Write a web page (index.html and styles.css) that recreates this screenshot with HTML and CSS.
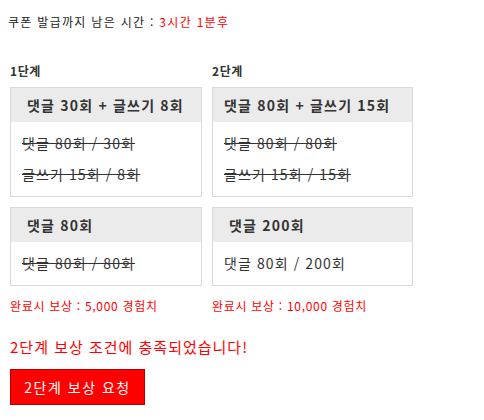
FILE: index.html
```html
<!DOCTYPE html>
<html lang="ko">
<head>
<meta charset="utf-8">
<link rel="stylesheet" href="styles.css">
</head>
<body>
<p class="timer">쿠폰 발급까지 남은 시간 : <span class="red">3시간 1분후</span></p>
<div class="wrap">
  <div class="steps">
    <div class="label">1단계</div>
    <div class="label">2단계</div>
    <div class="card">
      <div class="card-head">댓글 30회 + 글쓰기 8회</div>
      <div class="card-body">
        <div class="row done">댓글 80회 / 30회</div>
        <div class="row done">글쓰기 15회 / 8회</div>
      </div>
    </div>
    <div class="card">
      <div class="card-head tight">댓글 80회 + 글쓰기 15회</div>
      <div class="card-body">
        <div class="row done">댓글 80회 / 80회</div>
        <div class="row done">글쓰기 15회 / 15회</div>
      </div>
    </div>
    <div class="card">
      <div class="card-head">댓글 80회</div>
      <div class="card-body">
        <div class="row done">댓글 80회 / 80회</div>
      </div>
    </div>
    <div class="card">
      <div class="card-head">댓글 200회</div>
      <div class="card-body">
        <div class="row">댓글 80회 / 200회</div>
      </div>
    </div>
    <div class="reward">완료시 보상 : 5,000 경험치</div>
    <div class="reward">완료시 보상 : 10,000 경험치</div>
  </div>
  <p class="notice">2단계 보상 조건에 충족되었습니다!</p>
  <button class="btn">2단계 보상 요청</button>
</div>
</body>
</html>
```
FILE: styles.css
```css
body {
  margin: 8px;
  font-family: "Noto Sans CJK KR", "Noto Sans", sans-serif;
  color: #333;
  background: #fff;
}
.red { color: #ff0000; }
.timer {
  margin: 0;
  padding-top: 5px;
  font-size: 12px;
  line-height: 17px;
  letter-spacing: 1.3px;
  color: #222;
}
.wrap {
  padding-left: 2px;
}
.steps {
  display: grid;
  grid-template-columns: 192px 201px;
  column-gap: 10px;
  margin-top: 33px;
}
.label {
  font-size: 12px;
  font-weight: bold;
  line-height: 16px;
  letter-spacing: 0.6px;
  margin-bottom: 8px;
  color: #333;
}
.card {
  border: 1px solid #d9d9d9;
  margin-bottom: 10px;
  align-self: start;
}
.card-head {
  background: #ebebeb;
  height: 34px;
  line-height: 34px;
  padding: 0 16px;
  font-size: 14px;
  font-weight: bold;
  letter-spacing: 1.2px;
  color: #333;
  white-space: nowrap;
}
.card-head.tight { padding-left: 11px; }
.card-body {
  padding: 6px 11px;
}
.row {
  line-height: 31px;
  font-size: 14px;
  letter-spacing: 1.1px;
  color: #333;
}
.row.done { text-decoration: line-through; }
.reward {
  margin-top: 2px;
  font-size: 12px;
  line-height: 16px;
  letter-spacing: 0.7px;
  color: #ff0000;
}
.notice {
  margin: 23px 0 0;
  font-size: 15px;
  line-height: 20px;
  letter-spacing: 1px;
  color: #ff0000;
}
.btn {
  margin-top: 12px;
  width: 135px;
  height: 36px;
  background: #ff0000;
  border: 1px solid #b80000;
  color: #fff;
  font-family: inherit;
  font-size: 14px;
  letter-spacing: 1.5px;
  padding: 0;
  cursor: pointer;
}
```
